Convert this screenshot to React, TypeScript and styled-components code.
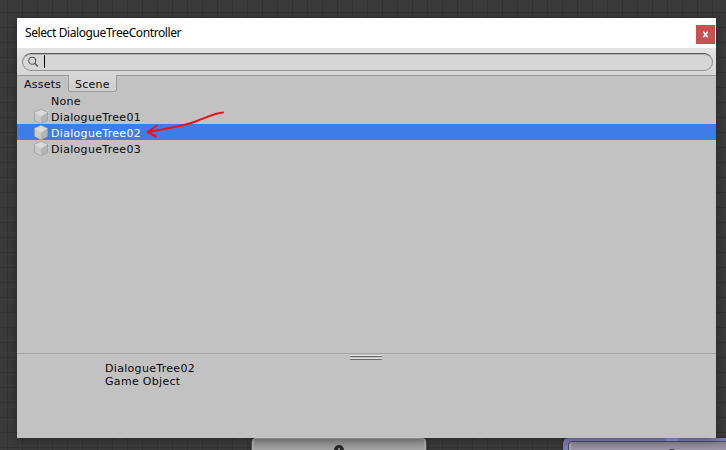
import React from "react";
import styled, { createGlobalStyle } from "styled-components";

const Global = createGlobalStyle`
  * { box-sizing: border-box; }
  body { margin: 0; overflow: hidden; background: #393939; }
`;

const Canvas = styled.main`
  position: relative;
  width: 726px;
  height: 450px;
  padding: 18px 10px 12px 17px;
  overflow: hidden;
  background:
    repeating-linear-gradient(90deg, transparent 0 7px, #323232 7px 8px, transparent 8px 15px),
    repeating-linear-gradient(180deg, transparent 0 12px, #323232 12px 13px, transparent 13px 15px),
    #3a3a3a;
`;

const Dialog = styled.section`
  position: relative;
  display: flex;
  flex-direction: column;
  width: 699px;
  height: 420px;
  background: #c2c2c2;
  box-shadow: 0 2px 9px rgba(0, 0, 0, 0.3);
  color: #090909;
  font: 11px/16px "DejaVu Sans", Verdana, sans-serif;
`;

const TitleBar = styled.header`
  display: flex;
  justify-content: space-between;
  height: 30px;
  padding: 7px 1px 0 8px;
  background: #fff;
`;

const Title = styled.h1`
  margin: 0;
  color: #000;
  font: 400 12px/16px "Noto Sans", "Segoe UI", sans-serif;
  letter-spacing: -0.4px;
  white-space: nowrap;
`;

const CloseButton = styled.button`
  display: flex;
  align-items: center;
  justify-content: center;
  width: 19px;
  height: 19px;
  padding: 0;
  border: 0;
  background: #c75050;
`;

const SearchBar = styled.div`
  height: 28px;
  padding: 5px 3px 0 5px;
  border-bottom: 1px solid #989898;
  background: linear-gradient(#e2e2e2, #d6d6d6);
`;

const SearchField = styled.label`
  display: flex;
  align-items: center;
  height: 18px;
  padding-left: 5px;
  border: 1px solid #919191;
  border-top-color: #595959;
  border-radius: 9px;
  background: #d6d6d6;
  box-shadow: inset 0 1px 0 #b2b2b2;
`;

const Caret = styled.span`
  width: 1px;
  height: 13px;
  margin: -1px 0 0 5px;
  background: #000;
`;

const Tabs = styled.nav`
  display: flex;
  height: 16px;
`;

const Tab = styled.span<{ $active?: boolean }>`
  width: ${(p) => (p.$active ? "49px" : "51px")};
  height: 17px;
  margin-top: ${(p) => (p.$active ? "-1px" : "0")};
  padding: ${(p) => (p.$active ? "2px 0 0 6px" : "1px 0 0 7px")};
  border: ${(p) => (p.$active ? "solid #9b9b9b" : "0")};
  border-width: ${(p) => (p.$active ? "0 1px 1px" : "0")};
  border-radius: 0 0 3px 3px;
  background: ${(p) => (p.$active ? "linear-gradient(#d6d6d6, #d0d0d0)" : "transparent")};
  letter-spacing: 0.25px;
`;

const AssetList = styled.ul`
  flex: 1;
  margin: 0;
  padding: 0;
  list-style: none;
`;

const AssetRow = styled.li<{ $selected?: boolean }>`
  display: flex;
  height: 16px;
  padding-left: 17px;
  background: ${(p) => (p.$selected ? "#3e7de7" : "transparent")};
  color: ${(p) => (p.$selected ? "#fff" : "#090909")};
  line-height: 20px;
  letter-spacing: 0.31px;
`;

const IconSlot = styled.span`
  display: flex;
  width: 17px;
  height: 16px;
`;

const Preview = styled.footer`
  display: flex;
  flex-direction: column;
  height: 85px;
  padding-left: 88px;
  border-top: 1px solid #a6a6a6;
  line-height: 13px;
  letter-spacing: 0.31px;
`;

const Grip = styled.div`
  width: 32px;
  height: 6px;
  margin: 1px 0 1px 245px;
  background: linear-gradient(#e0e0e0 0 1px, #6b6b6b 1px 2px, #c2c2c2 2px 3px, #e0e0e0 3px 4px, #6b6b6b 4px 5px, transparent 5px);
`;

const Arrow = styled.svg`
  position: absolute;
  left: 128px;
  top: 90px;
`;

const GraphNode = styled.div<{ $x: number; $wide?: boolean }>`
  position: absolute;
  left: ${(p) => p.$x}px;
  top: 438px;
  display: flex;
  justify-content: center;
  width: ${(p) => (p.$wide ? "214px" : "176px")};
  height: 26px;
  padding-top: ${(p) => (p.$wide ? "3px" : "0")};
  padding-left: ${(p) => (p.$wide ? "4px" : "0")};
  border-radius: 5px 5px 0 0;
  background: ${(p) => (p.$wide ? "#7b7bb6" : "#515151")};
  box-shadow: 0 0 3px #222;
`;

const NodeFace = styled.div<{ $wide?: boolean }>`
  display: flex;
  justify-content: center;
  width: ${(p) => (p.$wide ? "208px" : "174px")};
  height: 24px;
  padding-top: ${(p) => (p.$wide ? "7px" : "6px")};
  border: solid ${(p) => (p.$wide ? "#4d4a58" : "#aaa")};
  border-width: ${(p) => (p.$wide ? "1px" : "1px 2px")};
  border-radius: 4px 4px 0 0;
  background: ${(p) => (p.$wide ? "linear-gradient(#85828e, #9a96a6 8px)" : "linear-gradient(#888, #a2a2a2 10px)")};
  box-shadow: ${(p) => (p.$wide ? "inset 2px 0 0 #aaa6b7" : "none")};
`;

const Port = styled.span`
  position: absolute;
  left: 665px;
  top: 438px;
  width: 14px;
  height: 3px;
  background: #9090da;
  border-radius: 3px 3px 0 0;
`;

const CubeIcon = () => (
  <svg width="16" height="17" viewBox="0 0 16 17">
    <path d="M7 1.4 13.5 4.2v8.2L7 15.9.5 12.4V4.2Z" fill="#b8b8b8" stroke="#999" strokeWidth=".7" />
    <path d="m1 4.4 6-2.7 6 2.7-6 3.6Z" fill="#dadada" />
    <path d="m1 4.5 6 3.5v7.4l-6-3.3Z" fill="#cacaca" />
    <path d="m7 8 6-3.5v7.6l-6 3.3Z" fill="#b4b4b4" />
    <path d="m1 4.5 6 3.5 6-3.5" fill="none" stroke="#e6e6e6" strokeWidth=".6" />
  </svg>
);

const SearchIcon = () => (
  <svg width="11" height="12" viewBox="0 0 11 12" fill="none" stroke="#555">
    <circle cx="4.2" cy="4.7" r="3.5" strokeWidth="1.1" />
    <path d="m6.7 7.3 3.2 3.3" strokeWidth="1.5" />
  </svg>
);

const assets = ["DialogueTree01", "DialogueTree02", "DialogueTree03"];
const selected = "DialogueTree02";

export default function App() {
  return (
    <Canvas>
      <Global />
      <GraphNode $x={251}>
        <NodeFace><svg width="10" height="10"><circle cx="5" cy="5" r="5" fill="#292929" /><path d="M5 3v3" stroke="#888" strokeWidth="2" /></svg></NodeFace>
      </GraphNode>
      <GraphNode $x={563} $wide>
        <NodeFace $wide><svg width="10" height="10"><circle cx="5" cy="5" r="5" fill="#302e38" /></svg></NodeFace>
      </GraphNode>
      <Port />
      <Dialog>
        <TitleBar>
          <Title>Select DialogueTreeController</Title>
          <CloseButton aria-label="Close">
            <svg width="7" height="7" viewBox="0 0 7 7"><path d="m1.3 .7 4.4 5.6M5.7 .7 1.3 6.3" stroke="#fff" strokeWidth="1.6" /></svg>
          </CloseButton>
        </TitleBar>
        <SearchBar><SearchField><SearchIcon /><Caret /></SearchField></SearchBar>
        <Tabs><Tab>Assets</Tab><Tab $active>Scene</Tab></Tabs>
        <AssetList>
          <AssetRow><IconSlot />None</AssetRow>
          {assets.map((name) => (
            <AssetRow key={name} $selected={name === selected}><IconSlot><CubeIcon /></IconSlot>{name}</AssetRow>
          ))}
        </AssetList>
        <Preview><Grip /><span>{selected}</span><span>Game Object</span></Preview>
        <Arrow width="82" height="32" viewBox="0 0 82 32" fill="none" stroke="#f01118" strokeWidth="2" strokeLinecap="round" strokeLinejoin="round">
          <path d="M78 4.5C72 4.5 62 9 53 12.5 46 15.5 40 17 32 18.5 22 20.5 13 22.5 3 24M12 17.5 2.5 24 11 28.5" />
        </Arrow>
      </Dialog>
    </Canvas>
  );
}
